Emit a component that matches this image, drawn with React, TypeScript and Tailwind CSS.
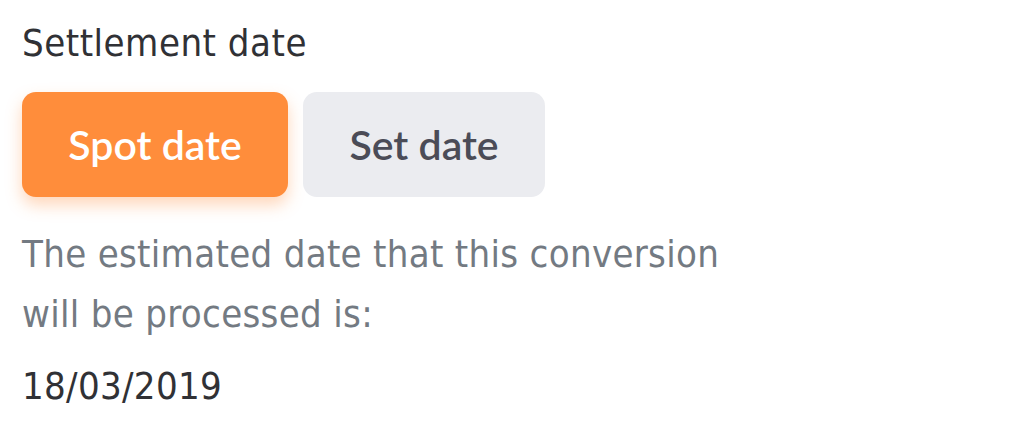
const din = { fontFamily: '"DejaVu Sans Condensed", "Liberation Sans Narrow", sans-serif' };

export default function App() {
  return (
    <div className="min-h-screen w-full bg-white px-[22px] pt-[21px]" style={din}>
      <h2 className="text-[38px] leading-[44px] tracking-[0.5px] text-[#303135]">Settlement date</h2>
      <div className="mt-[27px] flex gap-[15px]" style={{ fontFamily: "Lato, Inter, sans-serif" }}>
        <button className="h-[105px] w-[266px] rounded-[14px] bg-[#ff8d3b] text-[41px] font-semibold text-white shadow-[0_8px_16px_rgba(255,141,59,0.35)]">
          Spot date
        </button>
        <button className="h-[105px] w-[242px] rounded-[14px] bg-[#ebecf0] text-[41px] font-semibold text-[#4b4c57]">
          Set date
        </button>
      </div>
      <p className="mt-[27px] w-[720px] text-[38px] leading-[60px] tracking-[0.3px] text-[#737a82]">
        The estimated date that this conversion will be processed is:
      </p>
      <p className="mt-[20px] text-[38px] leading-[44px] tracking-[0.3px] text-[#303135]">18/03/2019</p>
    </div>
  );
}
